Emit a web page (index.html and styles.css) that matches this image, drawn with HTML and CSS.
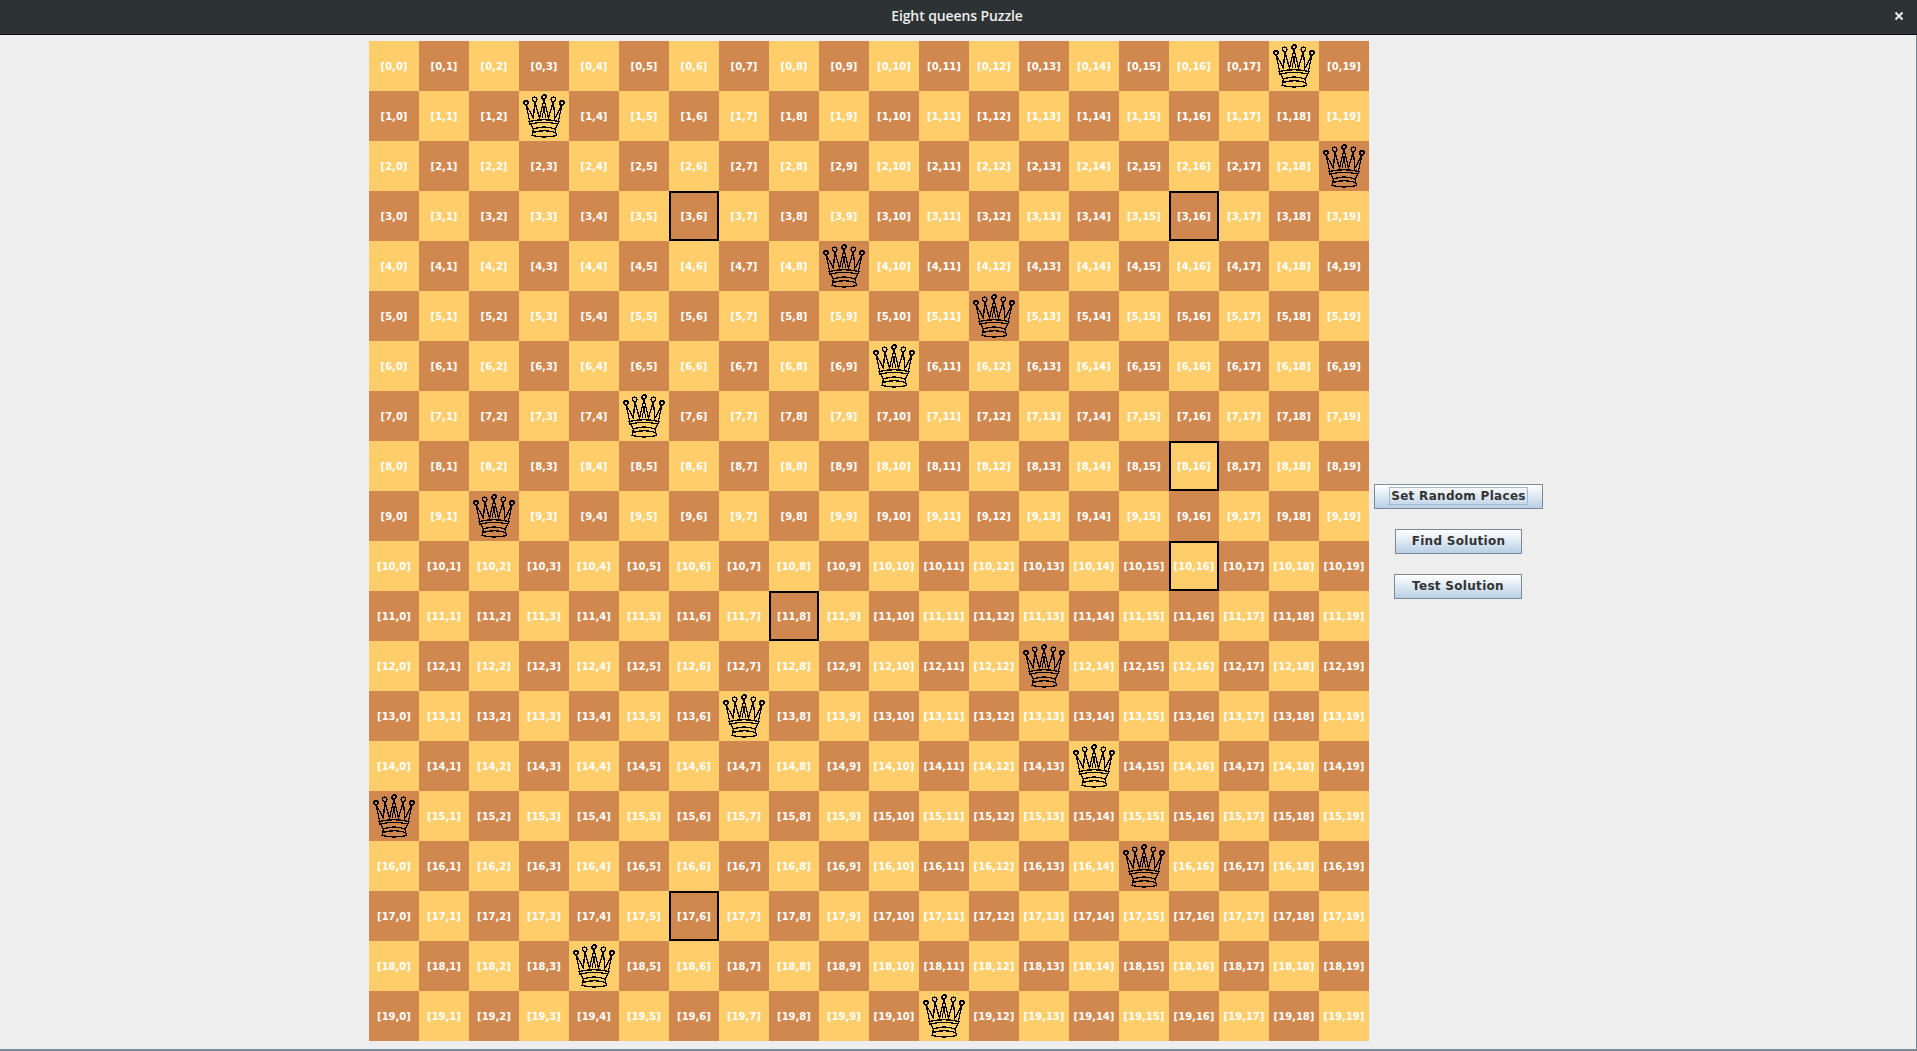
FILE: index.html
```html
<!DOCTYPE html>
<html>

<head>
    <meta name="viewport" content="width=device-width, initial-scale=1">
    <link rel="icon" href="data:,">
    <link rel="stylesheet" href="styles.css">
    <title>Eight queens Puzzle</title>
</head>

<body>
    <!-- Dibujo de la reina, se reutiliza en cada casilla -->
    <svg class="defs" width="0" height="0">
        <symbol id="queen" viewBox="0 0 50 50">
            <g fill="none" stroke="#000" stroke-width="1.3" shape-rendering="crispEdges">
                <circle cx="7" cy="12" r="2.2" />
                <circle cx="15.7" cy="8.3" r="2.2" />
                <circle cx="25" cy="6" r="2.2" />
                <circle cx="34.3" cy="8.3" r="2.2" />
                <circle cx="43" cy="12" r="2.2" />
                <path d="M10.5 30 L7.3 14.2 L14.5 27 L15.7 10.5 L20.5 27 L25 8.2 L29.5 27 L34.3 10.5 L36 27 L42.8 14.2 L39.5 30" />
                <path d="M23.4 27 L25 15 L26.6 27" stroke-width="1" />
                <path d="M10 30.5 Q25 27 40 30.5 L39 33 Q25 30 11 33 Z" />
                <path d="M11.5 33 L14.5 38 L13 44.5 Q25 47.5 37.5 44.5 L36 38 L39 33" />
                <path d="M14.5 38 Q25 34 36 38 M14 41.5 Q25 38 36.5 41.5" />
            </g>
        </symbol>
    </svg>

    <div class="window">
        <div class="titlebar">
            <span class="title">Eight queens Puzzle</span>
            <svg class="close" width="10" height="10" viewBox="0 0 10 10">
                <path d="M1.5 1.5 L8.5 8.5 M8.5 1.5 L1.5 8.5" stroke="#eeeeec" stroke-width="2" />
            </svg>
        </div>

        <div class="main">
            <div class="board" id="board"></div>

            <div class="controls">
                <button class="button button-random"><span class="focused">Set Random Places</span></button>
                <button class="button button-find"><span>Find Solution</span></button>
                <button class="button button-test"><span>Test Solution</span></button>
            </div>
        </div>
    </div>

    <script src="script.js"></script>
</body>

</html>
```

FILE: styles.css
```css
/* Ventana del puzzle */
html,
body {
    height: 100%;
    margin: 0;
}

body {
    font-family: "DejaVu Sans", sans-serif;
    background-color: #eeeeee;
    overflow: hidden;
}

.defs {
    display: block;
    height: 0;
}

.window {
    height: 100%;
    box-sizing: border-box;
    display: flex;
    flex-direction: column;
    border-right: 1px solid #7a8a99;
    border-bottom: 2px solid #7a8a99;
}

.titlebar {
    flex: none;
    height: 30px;
    margin-right: -1px;
    padding: 0 3px 4px 0;
    display: flex;
    align-items: center;
    justify-content: center;
    background-color: #2d3235;
    border-bottom: 1px solid #0c0d0e;
    color: #eeeeec;
    font-family: "Open Sans", sans-serif;
    font-size: 14px;
    font-weight: 600;
    letter-spacing: -0.1px;
}

.close {
    position: absolute;
    top: 11px;
    right: 13px;
}

.main {
    flex: 1;
    display: flex;
    padding: 6px 0 0 369px;
}

/* Tablero de 20 x 20 */
.board {
    flex: none;
    width: 1000px;
    height: 1000px;
    display: grid;
    grid-template-columns: repeat(20, 50px);
    grid-auto-rows: 50px;
}

.cell {
    display: flex;
    align-items: center;
    justify-content: center;
    box-sizing: border-box;
    color: #ffffff;
    font-size: 10px;
    font-weight: bold;
}

.light {
    background-color: #ffce6b;
}

.dark {
    background-color: #d1884f;
}

.marked {
    border: 2px solid #000000;
}

.queen {
    display: block;
    flex: none;
    width: 50px;
    height: 50px;
}

/* Botones */
.controls {
    flex: none;
    width: 179px;
    height: 1000px;
    display: flex;
    flex-direction: column;
    align-items: center;
    justify-content: center;
    gap: 20px;
}

.button {
    height: 25px;
    padding: 0;
    border: 1px solid #7a8a99;
    background: linear-gradient(#ffffff 0%, #dde8f3 50%, #b8cfe5 100%);
    color: #333333;
    font-family: "DejaVu Sans", sans-serif;
    font-size: 12px;
    font-weight: bold;
    letter-spacing: 0.3px;
    cursor: pointer;
}

.button-random {
    width: 169px;
}

.button-find {
    width: 127px;
}

.button-test {
    width: 128px;
    margin-right: 1px;
}

.focused {
    outline: 1px solid #a3b8cc;
    outline-offset: 1px;
}
```

FILE: script.js
```js
var SIZE = 20;

// Reinas colocadas al azar [fila, columna]
var queens = ['0,18', '1,3', '2,19', '4,9', '5,12', '6,10', '7,5', '9,2', '12,13', '13,7', '14,14', '15,0', '16,15', '18,4', '19,11'];

// Casillas marcadas con borde negro
var marked = ['3,6', '3,16', '8,16', '10,16', '11,8', '17,6'];

var board = document.getElementById('board');

for (var row = 0; row < SIZE; row++) {
    for (var col = 0; col < SIZE; col++) {
        var key = row + ',' + col;
        var cell = document.createElement('div');
        cell.className = 'cell ' + ((row + col) % 2 == 0 ? 'light' : 'dark');
        if (marked.indexOf(key) != -1) {
            cell.className += ' marked';
        }
        if (queens.indexOf(key) != -1) {
            cell.innerHTML = '<svg class="queen"><use href="#queen"/></svg>';
        } else {
            cell.textContent = '[' + key + ']';
        }
        board.appendChild(cell);
    }
}
```
